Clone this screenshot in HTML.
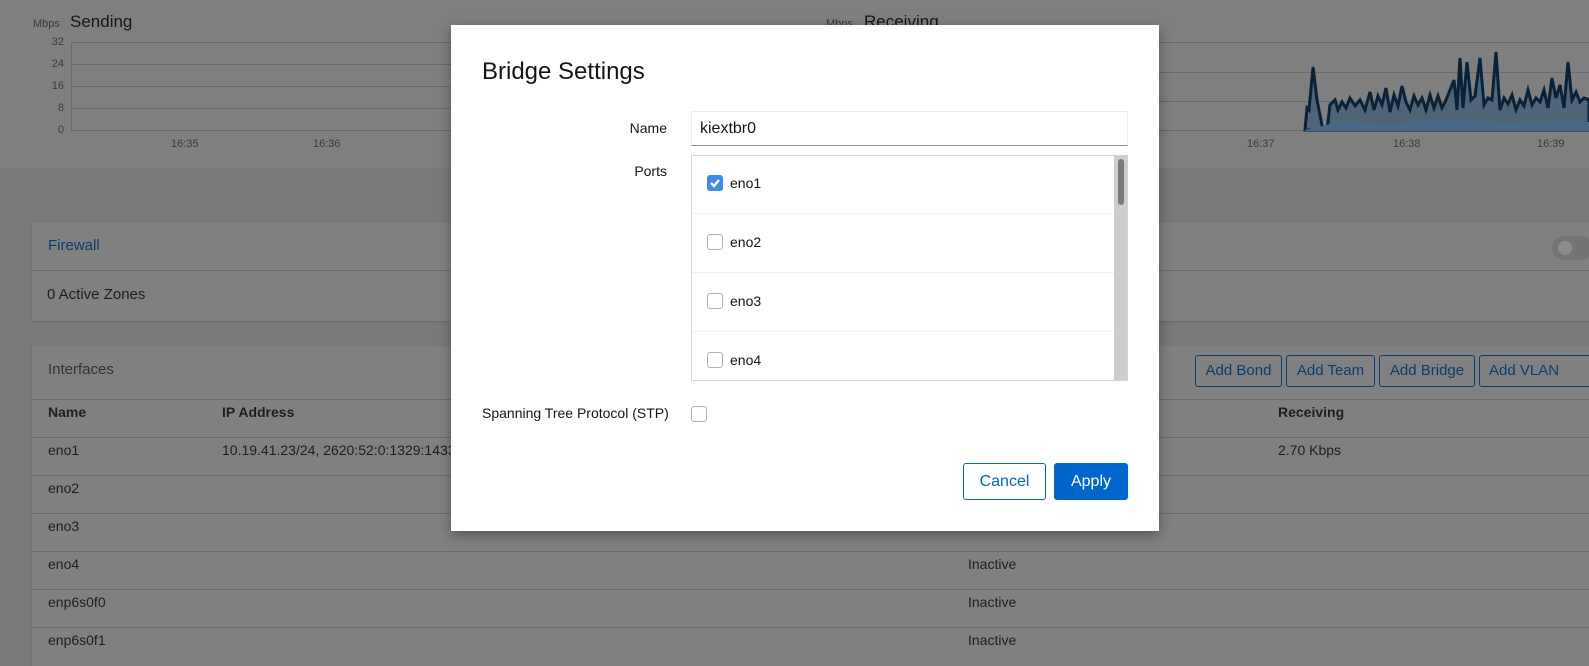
<!DOCTYPE html>
<html><head><meta charset="utf-8"><style>
*{box-sizing:border-box;margin:0;padding:0}
body{width:1589px;height:659px;overflow:hidden;background:#797979;font-family:"Liberation Sans",sans-serif;color:#151515;position:relative}
.a{position:absolute}
.top{left:0;top:0;width:1589px;height:168px;background:#7f7f7f}
.grid{height:1px;background:#6a6a6a}
.t{font-size:11px;color:#3a3a3a}
.card{background:#808080;box-shadow:0 1px 2px rgba(0,0,0,.15)}
.row{left:32px;width:1560px;height:1px;background:#6b6b6b}
.cell{font-size:14px;color:#1e1e1e}
.btn{border:1px solid #0b3d70;border-radius:3px;color:#0b3d70;font-size:15px;height:32px;line-height:30px;text-align:center;top:355px}
.dlg{left:451px;top:25px;width:708px;height:506px;background:#fff;box-shadow:0 4px 12px rgba(0,0,0,.35)}
.lbl{font-size:14px;color:#151515;text-align:right;width:200px}
.cb{width:16px;height:16px;border:1px solid #b8b0a8;border-radius:3px;background:#fff}
.port{font-size:14px;color:#151515}
</style></head><body>
<div class="a top"></div>
<div class="a t" style="left:33px;top:18px">Mbps</div>
<div class="a" style="left:70px;top:12px;font-size:17px;color:#151515">Sending</div>
<div class="a grid" style="left:72px;top:42px;width:390px"></div>
<div class="a grid" style="left:72px;top:64px;width:390px"></div>
<div class="a grid" style="left:72px;top:86px;width:390px"></div>
<div class="a grid" style="left:72px;top:108px;width:390px"></div>
<div class="a grid" style="left:72px;top:130px;width:390px"></div>
<div class="a" style="left:71px;top:42px;width:1px;height:89px;background:#6a6a6a"></div>
<div class="a t" style="left:48px;top:36px;width:16px;text-align:right">32</div>
<div class="a t" style="left:48px;top:58px;width:16px;text-align:right">24</div>
<div class="a t" style="left:48px;top:80px;width:16px;text-align:right">16</div>
<div class="a t" style="left:48px;top:102px;width:16px;text-align:right">8</div>
<div class="a t" style="left:48px;top:124px;width:16px;text-align:right">0</div>
<div class="a t" style="left:171px;top:138px">16:35</div>
<div class="a t" style="left:313px;top:138px">16:36</div>
<div class="a t" style="left:826px;top:18px">Mbps</div>
<div class="a" style="left:864px;top:12px;font-size:17px">Receiving</div>
<div class="a grid" style="left:1159px;top:42px;width:430px"></div>
<div class="a grid" style="left:1159px;top:72px;width:430px"></div>
<div class="a grid" style="left:1159px;top:101px;width:430px"></div>
<div class="a grid" style="left:1159px;top:130px;width:430px"></div>
<svg class="a" style="left:1300px;top:40px" width="289" height="92" viewBox="0 0 289 92">
<path d="M5 90 L7 68 L9 70 L13 27 L17 60 L20 75 L23 90 L27 90 L30 65 L35 60 L38 70 L42 62 L46 68 L50 58 L55 66 L60 60 L65 70 L70 52 L74 70 L78 56 L82 65 L86 48 L90 72 L94 55 L98 66 L102 46 L106 62 L110 70 L114 56 L118 65 L122 58 L126 70 L130 55 L134 68 L138 56 L142 68 L146 60 L150 50 L154 40 L157 70 L160 18 L163 68 L167 22 L171 60 L175 56 L180 18 L184 65 L188 58 L192 60 L196 12 L200 70 L204 58 L208 64 L212 55 L216 70 L220 60 L224 66 L228 50 L232 65 L236 58 L240 62 L244 50 L248 68 L252 38 L256 58 L260 45 L264 68 L268 22 L272 60 L276 52 L280 62 L284 58 L289 60 L289 90 Z" fill="#4f6577" stroke="#0a2238" stroke-width="3"/>
<path d="M5 90 L40 82 L90 84 L150 80 L200 83 L289 82 L289 91 L5 91Z" fill="#46698a"/>
</svg>
<div class="a t" style="left:1247px;top:138px">16:37</div>
<div class="a t" style="left:1393px;top:138px">16:38</div>
<div class="a t" style="left:1537px;top:138px">16:39</div>

<div class="a card" style="left:32px;top:223px;width:1560px;height:98px"></div>
<div class="a row" style="top:270px"></div>
<div class="a" style="left:48px;top:237px;font-size:15px;color:#0b3d70">Firewall</div>
<div class="a" style="left:47px;top:286px;font-size:15px;color:#1e1e1e">0 Active Zones</div>
<div class="a" style="left:1552px;top:236px;width:40px;height:24px;border-radius:12px;background:#747474"></div>
<div class="a" style="left:1558px;top:241px;width:14px;height:14px;border-radius:7px;background:#8c8c8c"></div>

<div class="a card" style="left:32px;top:346px;width:1560px;height:320px"></div>
<div class="a" style="left:48px;top:361px;font-size:15px;color:#333">Interfaces</div>
<div class="a btn" style="left:1195px;width:87px">Add Bond</div>
<div class="a btn" style="left:1286px;width:89px">Add Team</div>
<div class="a btn" style="left:1379px;width:96px">Add Bridge</div>
<div class="a btn" style="left:1479px;width:115px;text-align:left;padding-left:9px">Add VLAN</div>
<div class="a row" style="top:399px"></div>
<div class="a cell" style="left:48px;top:404px;font-weight:bold">Name</div>
<div class="a cell" style="left:222px;top:404px;font-weight:bold">IP Address</div>
<div class="a cell" style="left:1278px;top:404px;font-weight:bold">Receiving</div>
<div class="a row" style="top:437px"></div>
<div class="a cell" style="left:48px;top:442px">eno1</div>
<div class="a cell" style="left:222px;top:442px">10.19.41.23/24, 2620:52:0:1329:1433:5b</div>
<div class="a cell" style="left:1278px;top:442px">2.70 Kbps</div>
<div class="a row" style="top:475px"></div>
<div class="a cell" style="left:48px;top:480px">eno2</div>
<div class="a row" style="top:513px"></div>
<div class="a cell" style="left:48px;top:518px">eno3</div>
<div class="a row" style="top:551px"></div>
<div class="a cell" style="left:48px;top:556px">eno4</div>
<div class="a cell" style="left:968px;top:556px">Inactive</div>
<div class="a row" style="top:589px"></div>
<div class="a cell" style="left:48px;top:594px">enp6s0f0</div>
<div class="a cell" style="left:968px;top:594px">Inactive</div>
<div class="a row" style="top:627px"></div>
<div class="a cell" style="left:48px;top:632px">enp6s0f1</div>
<div class="a cell" style="left:968px;top:632px">Inactive</div>

<div class="a dlg"></div>
<div class="a" style="left:482px;top:58px;font-size:24px;color:#151515">Bridge Settings</div>
<div class="a lbl" style="left:467px;top:120px">Name</div>
<div class="a" style="left:691px;top:111px;width:437px;height:35px;border:1px solid #ededed;border-bottom:1px solid #8a8d90;font-size:16px;padding:8px 0 0 8px;color:#151515">kiextbr0</div>
<div class="a lbl" style="left:467px;top:163px">Ports</div>
<div class="a" style="left:691px;top:155px;width:437px;height:226px;border:1px solid #d2d2d2"></div>
<div class="a" style="left:1114px;top:156px;width:13px;height:224px;background:#cdcdcd"></div>
<div class="a" style="left:1118px;top:159px;width:6px;height:46px;border-radius:3px;background:#7a7a7a"></div>
<div class="a" style="left:692px;top:213px;width:422px;height:1px;background:#f0f0f0"></div>
<div class="a" style="left:692px;top:272px;width:422px;height:1px;background:#f0f0f0"></div>
<div class="a" style="left:692px;top:331px;width:422px;height:1px;background:#f0f0f0"></div>
<div class="a cb" style="left:707px;top:175px;background:#3d8ae8;border-color:#3d8ae8"><svg width="14" height="14" viewBox="0 0 14 14" style="position:absolute;left:0;top:0"><path d="M3 7 L6 10 L11 4" stroke="#fff" stroke-width="2.4" fill="none"/></svg></div>
<div class="a port" style="left:730px;top:175px">eno1</div>
<div class="a cb" style="left:707px;top:234px"></div>
<div class="a port" style="left:730px;top:234px">eno2</div>
<div class="a cb" style="left:707px;top:293px"></div>
<div class="a port" style="left:730px;top:293px">eno3</div>
<div class="a cb" style="left:707px;top:352px"></div>
<div class="a port" style="left:730px;top:352px">eno4</div>
<div class="a" style="left:482px;top:405px;font-size:14px">Spanning Tree Protocol (STP)</div>
<div class="a cb" style="left:691px;top:406px"></div>
<div class="a" style="left:963px;top:463px;width:83px;height:37px;border:1px solid #06c;border-radius:3px;color:#06c;font-size:16px;text-align:center;line-height:35px">Cancel</div>
<div class="a" style="left:1054px;top:463px;width:74px;height:37px;background:#06c;border-radius:3px;color:#fff;font-size:16px;text-align:center;line-height:37px">Apply</div>
</body></html>
